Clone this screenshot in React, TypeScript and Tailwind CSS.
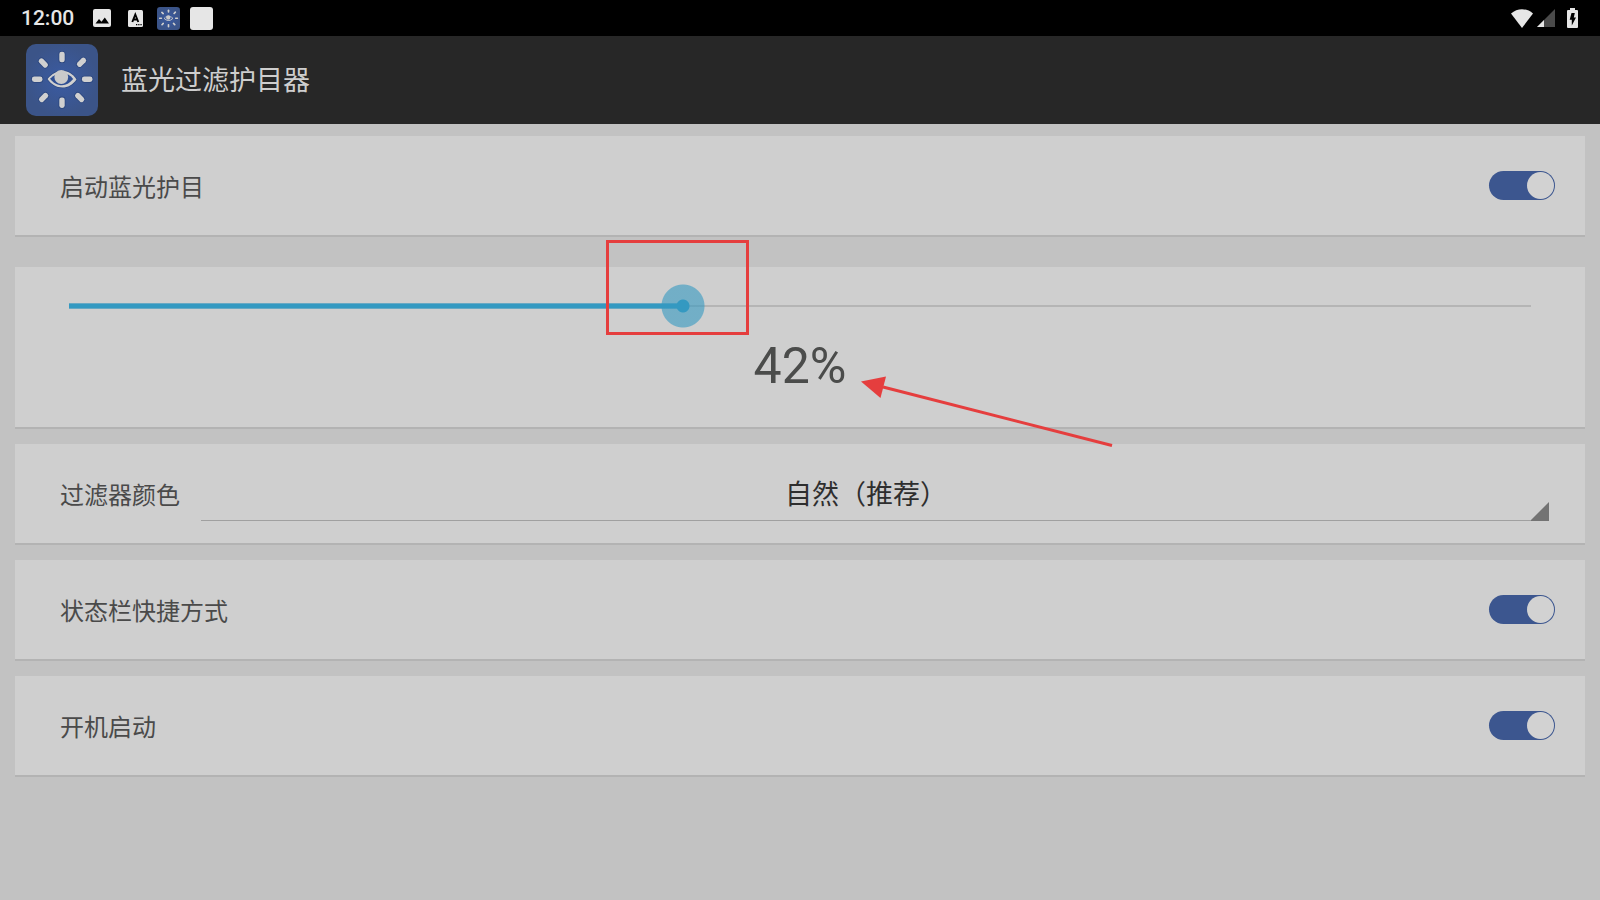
import { useState } from "react";

function AppIcon({ className }: { className: string }) {
  const rays = [
    { x: 36, y: 13, r: 0 },
    { x: 55.5, y: 18.3, r: 45 },
    { x: 61.2, y: 35.2, r: 90 },
    { x: 53.7, y: 53.5, r: 135 },
    { x: 36, y: 58.7, r: 0 },
    { x: 17.6, y: 53.5, r: 45 },
    { x: 11.2, y: 35.2, r: 90 },
    { x: 17.3, y: 19, r: 135 },
  ];
  return (
    <svg viewBox="0 0 72 72" className={className} aria-hidden="true">
      <defs>
        <radialGradient id="icon-glow">
          <stop offset="0" stopColor="#3a5ba3" />
          <stop offset="1" stopColor="#3b5488" />
        </radialGradient>
      </defs>
      <rect width="72" height="72" rx="10" fill="url(#icon-glow)" />
      {rays.map((ray, i) => (
        <rect
          key={i}
          x="-2.7"
          y="-5.3"
          width="5.4"
          height="10.6"
          rx="2.4"
          fill="#d0d0d0"
          stroke="#2b467e"
          strokeWidth="1.6"
          paintOrder="stroke"
          transform={`translate(${ray.x} ${ray.y}) rotate(${ray.r})`}
        />
      ))}
      <path
        d="M21.5 35C26 29.5 31 27 36.5 27C42.5 27 47 30 50.5 35.5C46.5 41 42 43.5 36.5 43.5C30 43.5 25.5 40.5 21.5 35Z"
        fill="#d0d0d0"
        stroke="#2b467e"
        strokeWidth="1.4"
        paintOrder="stroke"
      />
      <path
        d="M24 34.7C28 30.700 32 29.300 36 29.200C41 29.200 44.500 31.300 47.200 35C43.500 39.300 40 41.200 36 41.200C31 41.200 27.500 39 24 34.7Z"
        fill="#2f4f94"
      />
      <circle cx="35.300" cy="33" r="6.900" fill="#cacaca" />
    </svg>
  );
}

function StatusBar() {
  return (
    <div className="flex h-9 items-center justify-between bg-black pr-[22px] pl-[21px] text-[#e6e6e6]">
      <div className="flex items-center">
        <span className="w-[72px] text-[21px] leading-6 font-medium">12:00</span>
        <svg viewBox="0 0 18 18" className="h-[18px] w-[18px]" aria-hidden="true">
          <rect width="18" height="18" rx="2" fill="#e6e6e6" />
          <path d="M2.500 14.500L6 10L8.500 12.800L11.800 8.500L16 14.500Z" fill="#000" />
        </svg>
        <svg viewBox="0 0 15 17" className="ml-[17px] h-[17px] w-[15px]" aria-hidden="true">
          <rect width="15" height="17" rx="1.500" fill="#e6e6e6" />
          <path
            d="M4.300 12L7.300 4.500L10.300 12M5.300 9.500H9.300"
            fill="none"
            stroke="#000"
            strokeWidth="1.900"
          />
          <path d="M8 14h1.300v1.300H8zM10.200 14h1.300v1.300h-1.300zM12.400 14h1.300v1.300h-1.300z" fill="#000" />
        </svg>
        <AppIcon className="ml-3.5 h-[23px] w-[23px]" />
        <span className="ml-2.5 h-[23px] w-[23px] rounded-[3px] bg-[#e6e6e6]" />
      </div>
      <div className="flex items-center">
        <svg viewBox="0 0 22 19" className="h-[19px] w-[22px]" aria-hidden="true">
          <path d="M0 4.500C6.500 -1.300 15.500 -1.300 22 4.500L11 19Z" fill="#e6e6e6" />
        </svg>
        <svg viewBox="0 0 18 18" className="ml-1 h-[18px] w-[18px]" aria-hidden="true">
          <path d="M18 0V18H0Z" fill="#4a4a4a" />
          <path d="M7 11V18H0Z" fill="#e6e6e6" />
        </svg>
        <svg viewBox="0 0 11 20" className="ml-3 h-5 w-[11px]" aria-hidden="true">
          <path d="M3 0H8V2H10Q11 2 11 3V19Q11 20 10 20H1Q0 20 0 19V3Q0 2 1 2H3Z" fill="#e6e6e6" />
          <path d="M4.500 5H7.800L6.800 9.500H9L4.800 17.500V11.800H2.700Z" fill="#000" />
        </svg>
      </div>
    </div>
  );
}

const cardClass = "border-b-2 border-[#b3b3b3] bg-[#cfcfcf]";

function SwitchRow({ id, label }: { id: string; label: string }) {
  return (
    <div className={`${cardClass} flex h-[101px] items-center justify-between pr-[30px] pl-[45px]`}>
      <label htmlFor={id} className="pt-1 text-2xl text-[#4a4a4a]">
        {label}
      </label>
      <input
        id={id}
        type="checkbox"
        role="switch"
        defaultChecked
        className="h-[29px] w-[66px] cursor-pointer appearance-none rounded-full bg-[#8b8b8b] p-px before:block before:h-[27px] before:w-[27px] before:rounded-full before:bg-[#d2d2d2] checked:bg-[#3c568f] checked:before:ml-auto"
      />
    </div>
  );
}

export default function App() {
  const [level, setLevel] = useState(42);
  return (
    <div className="min-h-screen bg-[#c2c2c2] font-[Roboto,'Noto_Sans_CJK_SC',sans-serif]">
      <StatusBar />
      <header className="flex h-[88px] items-center bg-[#272727] pl-[26px]">
        <AppIcon className="h-[72px] w-[72px]" />
        <h1 className="ml-[23px] pt-0.5 text-[27px] text-[#cecece]">蓝光过滤护目器</h1>
      </header>
      <main className="flex flex-col gap-[15px] px-[15px] pt-3 pb-4">
        <SwitchRow id="enable" label="启动蓝光护目" />

        <section className={`${cardClass} mt-[15px] flex h-[162px] flex-col px-8 pt-[17px]`}>
          <div className="relative flex h-11 items-center px-[22px]">
            <div className="relative h-0.5 w-full bg-[#b5b5b5]">
              <div
                className="absolute -top-0.5 left-0 h-1.5 border-y border-[#68a9c4] bg-[#3499c1]"
                style={{ width: `${level}%` }}
              />
              <div className="absolute -top-[65px] left-[42%] -ml-[77px] h-[95px] w-[143px] border-3 border-[#e53e3e]" />
            </div>
            <input
              type="range"
              min={0}
              max={100}
              value={level}
              onChange={(e) => setLevel(Number(e.target.value))}
              aria-label="过滤强度"
              className="absolute inset-0 h-full w-full cursor-pointer appearance-none bg-transparent [&::-webkit-slider-thumb]:h-11 [&::-webkit-slider-thumb]:w-11 [&::-webkit-slider-thumb]:appearance-none [&::-webkit-slider-thumb]:bg-[radial-gradient(circle,#3499c1_6px,#3499c199_7px,#3499c199_21px,transparent_22px)]"
            />
          </div>
          <div className="relative mt-2 self-center text-[50px] leading-[60px] text-[#4b4c4b]">
            {level}%
            <svg
              viewBox="0 0 254 72"
              className="pointer-events-none absolute top-10 left-full ml-[15px] h-[72px] w-[254px]"
              aria-hidden="true"
            >
              <path d="M22 11L251 69.500" stroke="#e53e3e" strokeWidth="3" />
              <path d="M0 5.500L25 0.500L19.500 22Z" fill="#e53e3e" />
            </svg>
          </div>
        </section>

        <div className={`${cardClass} flex h-[101px] items-center pr-9 pl-[45px]`}>
          <label htmlFor="color" className="shrink-0 pt-1 text-2xl text-[#4a4a4a]">
            过滤器颜色
          </label>
          <div className="relative ml-[21px] flex-1">
            <select
              id="color"
              className="block h-[55px] w-full appearance-none border-b border-[#a0a0a0] bg-transparent pt-1 pr-[18px] text-center text-[27px] text-[#2e2e2e] [text-align-last:center]"
            >
              <option>自然（推荐）</option>
            </select>
            <svg
              viewBox="0 0 18 19"
              className="pointer-events-none absolute right-0 bottom-0 h-[19px] w-[18px]"
              aria-hidden="true"
            >
              <path d="M18 0V19H0V18Z" fill="#737373" />
            </svg>
          </div>
        </div>

        <SwitchRow id="shortcut" label="状态栏快捷方式" />
        <SwitchRow id="boot" label="开机启动" />
      </main>
    </div>
  );
}
